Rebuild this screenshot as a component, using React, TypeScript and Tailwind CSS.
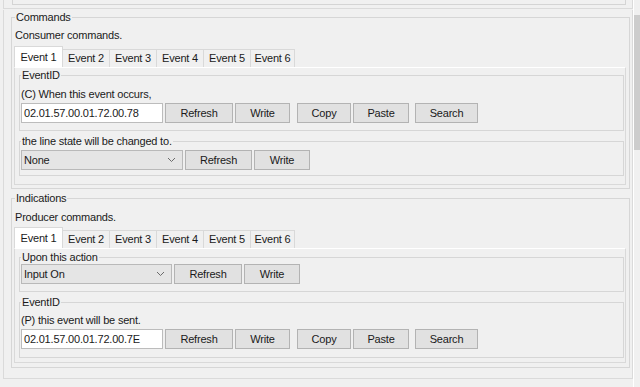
import React from "react";

const tabs = ["Event 1", "Event 2", "Event 3", "Event 4", "Event 5", "Event 6"];

function Btn({ label, w }: { label: string; w: string }) {
  return (
    <button
      className={`${w} h-[20px] shrink-0 bg-[#e1e1e1] border border-[#b3b3b3] text-[11px] leading-[18px] tracking-[-0.2px] text-[#1a1a1a]`}
    >
      {label}
    </button>
  );
}

function TextBox({ value }: { value: string }) {
  return (
    <div className="w-[142px] h-[20px] shrink-0 bg-white border border-[#bcbcbc] pl-[2px] leading-[18px] text-[#1a1a1a]">
      {value}
    </div>
  );
}

function Combo({ value, w }: { value: string; w: string }) {
  return (
    <div
      className={`${w} h-[20px] shrink-0 flex items-center justify-between bg-[#e5e5e5] border border-[#b9b9b9] pl-[2px] pr-[6px] leading-[18px] text-[#1a1a1a]`}
    >
      <span>{value}</span>
      <svg width="9" height="6" viewBox="0 0 9 6">
        <polyline points="1,1 4.5,4.5 8,1" fill="none" stroke="#6b6b6b" strokeWidth="1" />
      </svg>
    </div>
  );
}

function TabStrip() {
  return (
    <div className="flex items-end h-[21px]">
      {tabs.map((t, i) =>
        i === 0 ? (
          <div
            key={t}
            className="w-[49px] h-[21px] bg-white border border-b-0 border-[#d9d9d9] flex items-center justify-center"
          >
            {t}
          </div>
        ) : (
          <div
            key={t}
            className={`${i === 5 ? "w-[44px]" : "w-[47px]"} h-[18px] border-t border-r border-[#d9d9d9] flex items-center justify-center`}
          >
            {t}
          </div>
        )
      )}
    </div>
  );
}

function EventIdRow({ value }: { value: string }) {
  return (
    <div className="flex mt-[2px]">
      <TextBox value={value} />
      <div className="ml-[2px]"><Btn label="Refresh" w="w-[68px]" /></div>
      <div className="ml-[2px]"><Btn label="Write" w="w-[55px]" /></div>
      <div className="ml-[7px]"><Btn label="Copy" w="w-[54px]" /></div>
      <div className="ml-[2px]"><Btn label="Paste" w="w-[56px]" /></div>
      <div className="ml-[6px]"><Btn label="Search" w="w-[63px]" /></div>
    </div>
  );
}

function Group({
  title,
  className,
  children,
}: {
  title: string;
  className: string;
  children: React.ReactNode;
}) {
  return (
    <fieldset className={`w-[605px] border border-[#d6d6d6] pl-[1px] ${className}`}>
      <legend className="px-[1px] leading-[14px]">{title}</legend>
      {children}
    </fieldset>
  );
}

export default function App() {
  return (
    <div className="w-[640px] h-[387px] overflow-hidden bg-[#f0f0f0] flex font-['Liberation_Sans',Arial,sans-serif] text-[11px] tracking-[-0.2px] text-[#1a1a1a]">
      <div className="w-[633px]">
        {/* tail of the panel above */}
        <div className="ml-[3px] w-[630px] h-[9px] border-x border-b border-[#dadada]">
          <div className="ml-[8px] w-[614px] h-[5px] border-x border-b border-[#d4d4d4]" />
        </div>

        <div className="ml-[3px] w-[630px] border-x border-b border-[#dadada] pb-[10px]">
          {/* Commands */}
          <fieldset className="ml-[7px] mt-[1px] w-[619px] border border-[#d6d6d6] pl-[2px] pb-[3px]">
            <legend className="ml-[1px] px-[1px] leading-[14px]">Commands</legend>
            <div className="mt-[4px] pl-[1px] leading-[14px]">Consumer commands.</div>
            <div className="mt-[4px]">
              <TabStrip />
            </div>
            <div className="w-[612px] h-[118px] border border-[#d9d9d9] border-t-white pl-[4px]">
              <Group title="EventID" className="mt-0 pb-[7px]">
                <div className="mt-[5px] leading-[14px]">(C) When this event occurs,</div>
                <EventIdRow value="02.01.57.00.01.72.00.78" />
              </Group>
              <Group title="the line state will be changed to." className="mt-[3px] pb-[5px]">
                <div className="flex mt-[2px]">
                  <Combo value="None" w="w-[162px]" />
                  <div className="ml-[2px]"><Btn label="Refresh" w="w-[67px]" /></div>
                  <div className="ml-[2px]"><Btn label="Write" w="w-[56px]" /></div>
                </div>
              </Group>
            </div>
          </fieldset>

          {/* Indications */}
          <fieldset className="ml-[7px] mt-[2px] w-[619px] border border-[#d6d6d6] pl-[2px] pb-[4px]">
            <legend className="ml-[1px] px-[1px] leading-[14px]">Indications</legend>
            <div className="mt-[5px] pl-[1px] leading-[14px]">Producer commands.</div>
            <div className="mt-[3px]">
              <TabStrip />
            </div>
            <div className="w-[612px] h-[115px] border border-[#d9d9d9] border-t-white pl-[4px]">
              <Group title="Upon this action" className="mt-[1px] pb-[7px]">
                <div className="flex">
                  <Combo value="Input On" w="w-[151px]" />
                  <div className="ml-[2px]"><Btn label="Refresh" w="w-[68px]" /></div>
                  <div className="ml-[2px]"><Btn label="Write" w="w-[56px]" /></div>
                </div>
              </Group>
              <Group title="EventID" className="mt-[3px] pb-[8px]">
                <div className="mt-[4px] leading-[14px]">(P) this event will be sent.</div>
                <EventIdRow value="02.01.57.00.01.72.00.7E" />
              </Group>
            </div>
          </fieldset>
        </div>
      </div>

      {/* scrollbar */}
      <div className="w-[7px] h-full border-l border-white pt-[15px]">
        <div className="w-[6px] h-[135px] bg-[#cdcdcd]" />
      </div>
    </div>
  );
}
